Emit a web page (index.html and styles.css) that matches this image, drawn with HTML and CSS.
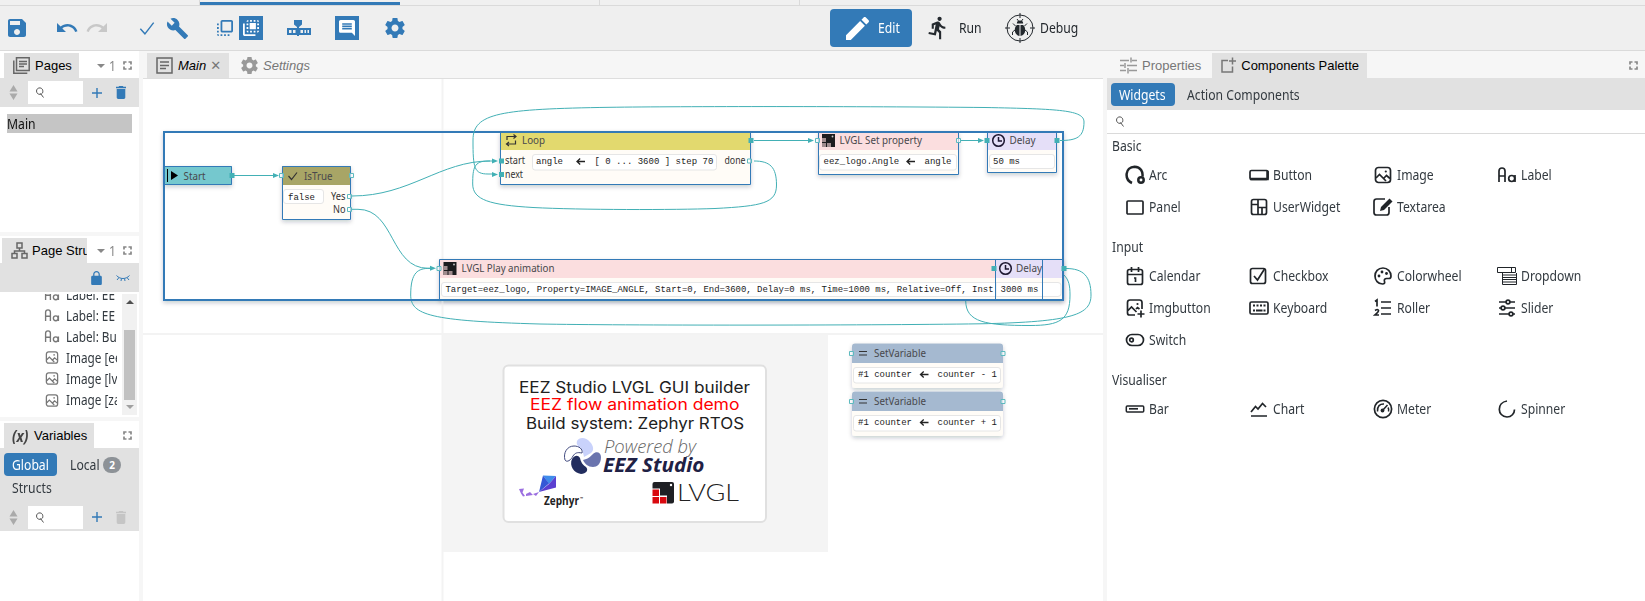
FILE: index.html
```html
<!DOCTYPE html>
<html lang="en">
<head>
<meta charset="utf-8">
<title>EEZ Studio</title>
<link rel="stylesheet" href="styles.css">
</head>
<body>
<svg class="defs" aria-hidden="true">
<symbol id="save" viewBox="3 3 18 18"><path d="M17 3H5c-1.11 0-2 .9-2 2v14c0 1.1.89 2 2 2h14c1.1 0 2-.9 2-2V7l-4-4zm-5 16c-1.66 0-3-1.34-3-3s1.34-3 3-3 3 1.34 3 3-1.34 3-3 3zm3-10H5V5h10v4z"/></symbol>
<symbol id="undo" viewBox="0 0 24 24"><path d="M12.5 8c-2.65 0-5.05.99-6.9 2.6L2 7v9h9l-3.62-3.62c1.39-1.16 3.16-1.88 5.12-1.88 3.54 0 6.55 2.31 7.6 5.5l2.37-.78C21.08 11.03 17.15 8 12.5 8z"/></symbol>
<symbol id="redo" viewBox="0 0 24 24"><path d="M18.4 10.6C16.55 8.99 14.15 8 11.5 8c-4.65 0-8.58 3.03-9.96 7.22L3.9 16c1.05-3.19 4.05-5.5 7.6-5.5 1.95 0 3.73.72 5.12 1.88L13 16h9V7l-3.6 3.6z"/></symbol>
<symbol id="check" viewBox="0 0 24 24"><path d="M4 13l5.500 6L20 5.500" class="ln"/></symbol>
<symbol id="build" viewBox="0 0 24 24"><path d="M22.7 19l-9.1-9.1c.9-2.3.4-5-1.500-6.900-2-2-5-2.400-7.400-1.300L9 6 6 9 1.600 4.700C.4 7.100.9 10.100 2.900 12.100c1.900 1.900 4.600 2.400 6.900 1.500l9.100 9.100c.4.4 1 .4 1.400 0l2.300-2.300c.5-.4.5-1.100.1-1.400z"/></symbol>
<symbol id="front" viewBox="3 3 18 18"><path d="M3 13h2v-2H3v2zm0 4h2v-2H3v2zm2 4v-2H3c0 1.1.89 2 2 2zM3 9h2V7H3v2zm12 12h2v-2h-2v2zm4-18H9c-1.11 0-2 .9-2 2v10c0 1.1.89 2 2 2h10c1.1 0 2-.9 2-2V5c0-1.1-.9-2-2-2zm0 12H9V5h10v10zm-8 6h2v-2h-2v2zm-4 0h2v-2H7v2z"/></symbol>
<symbol id="back" viewBox="3 3 18 18"><path d="M9 7H7v2h2V7zm0 4H7v2h2v-2zm0-8c-1.11 0-2 .9-2 2h2V3zm4 12h-2v2h2v-2zm6-12v2h2c0-1.1-.9-2-2-2zm-6 0h-2v2h2V3zM9 17v-2H7c0 1.1.89 2 2 2zm10-4h2v-2h-2v2zm0-4h2V7h-2v2zm0 8c1.1 0 2-.9 2-2h-2v2zM5 7H3v12c0 1.1.89 2 2 2h12v-2H5V7zm10-2h2V3h-2v2zm0 12h2v-2h-2v2zM10.500 6.500h7v7h-7z"/></symbol>
<symbol id="timeline" viewBox="0 0 24 16"><path d="M7 0h8v4.500l-3 2.500v9h-2V7L7 4.500zM0 8h24v7H0z"/><path class="cut" d="M2 10h2.500v3H2zM6 10h2.500v3H6zM13.500 10H16v3h-2.500zM17.500 10h1.500v3h-1.500zM20.500 10H22v3h-1.500z"/></symbol>
<symbol id="comment" viewBox="2 2 20 20"><path d="M21.99 4c0-1.1-.89-2-1.99-2H4c-1.1 0-2 .9-2 2v12c0 1.1.9 2 2 2h14l4 4-.01-18zM18 14H6v-2h12v2zm0-3H6V9h12v2zm0-3H6V6h12v2z"/></symbol>
<symbol id="gear" viewBox="2 2 20 20"><path d="M19.43 12.98c.04-.32.07-.64.07-.98s-.03-.66-.07-.98l2.110-1.650c.19-.15.24-.42.12-.64l-2-3.460c-.12-.22-.39-.3-.61-.22l-2.490 1c-.52-.4-1.080-.73-1.690-.98l-.38-2.650C14.460 2.180 14.250 2 14 2h-4c-.25 0-.46.18-.49.42l-.38 2.650c-.61.25-1.170.59-1.690.98l-2.490-1c-.23-.09-.49 0-.61.22l-2 3.460c-.13.22-.07.49.12.64l2.110 1.650c-.04.32-.07.65-.07.98s.03.66.07.98l-2.110 1.650c-.19.15-.24.42-.12.64l2 3.460c.12.22.39.3.61.22l2.490-1c.52.4 1.080.73 1.690.98l.38 2.650c.03.24.24.42.49.42h4c.25 0 .46-.18.49-.42l.38-2.650c.61-.25 1.170-.59 1.690-.98l2.490 1c.23.09.49 0 .61-.22l2-3.460c.12-.22.07-.49-.12-.64l-2.110-1.650zM12 15.500c-1.930 0-3.500-1.570-3.500-3.500s1.570-3.500 3.500-3.500 3.500 1.570 3.500 3.500-1.570 3.500-3.500 3.500z"/></symbol>
<symbol id="edit" viewBox="3 3 18 18"><path d="M3 17.250V21h3.750L17.810 9.940l-3.750-3.750L3 17.250zM20.710 7.040c.39-.39.39-1.020 0-1.410l-2.340-2.340c-.39-.39-1.020-.39-1.410 0l-1.830 1.830 3.750 3.750 1.830-1.830z"/></symbol>
<symbol id="run" viewBox="1.500 1.500 20 21.500"><path d="M13.490 5.480c1.100 0 2-.9 2-2s-.9-2-2-2-2 .9-2 2 .9 2 2 2zm-3.600 13.900l1-4.400 2.100 2v6h2v-7.500l-2.100-2 .6-3c1.300 1.500 3.300 2.500 5.500 2.500v-2c-1.900 0-3.500-1-4.300-2.400l-1-1.600c-.4-.6-1-1-1.700-1-.3 0-.5.1-.8.1l-5.200 2.200v4.700h2v-3.400l1.800-.7-1.600 8.100-4.900-1-.4 2 7 1.400z"/></symbol>
<symbol id="bug" viewBox="0 0 30 30"><g class="thin"><circle cx="15" cy="15" r="13"/><path d="M15 0v5M15 25v5M0 15h5M25 15h5M12 6l1.500 2M18 6l-1.500 2M10.500 13L8 10.500M19.500 13l2.500-2.500M10 17l-2.500 2v3M20 17l2.500 2v3"/></g><path d="M11.800 10.500a3.200 3 0 0 1 6.400 0zM14.500 12v11c-3-.5-4.700-3-4.700-6 0-2.500 1-4.500 2.200-5zM15.500 12v11c3-.5 4.700-3 4.700-6 0-2.500-1-4.500-2.200-5z"/></symbol>
<symbol id="trash" viewBox="5 3 14 18"><path d="M6 19c0 1.1.9 2 2 2h8c1.100 0 2-.9 2-2V7H6v12zM19 4h-3.500l-1-1h-5l-1 1H5v2h14V4z"/></symbol>
<symbol id="add" viewBox="5 5 14 14"><path d="M19 13h-6v6h-2v-6H5v-2h6V5h2v6h6v2z"/></symbol>
<symbol id="lock" viewBox="4 1 16 21"><path d="M18 8h-1V6c0-2.760-2.240-5-5-5S7 3.240 7 6v2H6c-1.100 0-2 .9-2 2v10c0 1.100.9 2 2 2h12c1.100 0 2-.9 2-2V10c0-1.100-.9-2-2-2zM15.100 8H8.900V6c0-1.710 1.390-3.100 3.100-3.100 1.710 0 3.100 1.390 3.100 3.100v2z"/></symbol>
<symbol id="eyeoff" viewBox="0 0 14 8"><path class="thin" d="M.5 1.500C4 5.500 10 5.500 13.500 1.500M3 3.500L1 6M5.500 4.500L5 7M8.500 4.500L9 7M11 3.500L13 6"/></symbol>
<symbol id="sort" viewBox="0 0 8 15"><path d="M4 0l4 6.500H0zM4 15L0 8.500h8z"/></symbol>
<symbol id="find" viewBox="0 0 10 11"><path class="thin" d="M7.500 6C6.300 7.600 4 7.800 2.500 6.500 1.200 5 1.200 3 2.500 1.700 4 .4 6.300.7 7.300 2.200 8 3.500 8 5 7.500 6zM5.500 6.500l3 4"/></symbol>
<symbol id="max" viewBox="0 0 9 9"><path class="ln" d="M1 3.500V1h2.500M5.500 1H8v2.500M8 5.500V8H5.500M3.500 8H1V5.500"/></symbol>
<symbol id="pages" viewBox="0 0 17 17"><path class="md" d="M3.500 .8h12.700v12.700H3.500zM.8 3.500v12.700h13.500M6 4.500h8M6 7h8M6 9.500h5"/></symbol>
<symbol id="page" viewBox="0 0 17 17"><path class="md" d="M1 1h15v15H1zM4 5h9M4 8.500h9M4 11.500h6"/></symbol>
<symbol id="tree" viewBox="0 0 17 17"><path class="md" d="M6 1h5v5H6zM1 11.500h5V16H1zM11 11.500h5V16h-5zM8.500 6v3M3.500 11.500V9h10v2.500"/></symbol>
<symbol id="tune" viewBox="0 0 17 16"><path class="md" d="M0 3h9M12 3h5M11 0v5M0 8h4M7 8h10M5 5.500v5M0 13h6M9 13h8M8 10.500V16"/></symbol>
<symbol id="addcomp" viewBox="0 0 15 16"><path class="md" d="M7 3H1v11.500h10.500V9M11.500 0v7M8 3.500h7"/></symbol>
<symbol id="label" viewBox="0 0 20 18"><path class="ln" d="M2 16V5q0-3 3-3t3 3v11M2 10h6M18 9v7"/><circle class="ln" cx="14.700" cy="12.500" r="3"/></symbol>
<symbol id="image" viewBox="-1 -1 20 20"><rect class="ln" x="1.500" y="1.500" width="15" height="15" rx="3"/><path class="ln" d="M2 12l3.500-3.500 6.500 6.500M10 12l2.500-2.500L16 12.500"/><circle cx="11.800" cy="5.500" r="1.100"/></symbol>
<symbol id="arc" viewBox="0 0 20 20"><path class="hv" d="M7 18C-1 14.500 0 2 9.500 1.800 16 2 18 7 17.500 11.500"/><circle class="hv" cx="16" cy="15" r="2.700"/></symbol>
<symbol id="button" viewBox="0 0 20 20"><rect class="ln" x="1" y="5.500" width="18" height="9" rx="1.500"/><path class="hv" d="M1 14h17.500V6"/></symbol>
<symbol id="panel" viewBox="0 0 20 20"><rect class="ln" x="2" y="4" width="16" height="13" rx="1"/></symbol>
<symbol id="uw" viewBox="0 0 20 20"><rect class="ln" x="2.500" y="2.500" width="15" height="15" rx="2"/><path class="ln" d="M9 2.500v15M9 10.500h8.500M2.500 7.500H9M13 10.500v7"/></symbol>
<symbol id="textarea" viewBox="0 0 20 20"><path class="ln" d="M12 2H3.500Q1 2 1 4.500v11Q1 18 3.500 18h10q2.500 0 2.500-2.500V10"/><path d="M7 14l1-4 8.500-8.500 3 3L11 13z"/></symbol>
<symbol id="cal" viewBox="0 0 20 20"><rect class="ln" x="2.500" y="3.500" width="15" height="15" rx="2"/><path class="ln" d="M2.500 8.500h15M6.500 1v5M13.500 1v5M9 12h1.500v4"/></symbol>
<symbol id="cbx" viewBox="0 0 20 20"><rect class="ln" x="1.500" y="2.500" width="15" height="15" rx="2"/><path class="ln" d="M5 10l3.500 4L15.500 3"/></symbol>
<symbol id="wheel" viewBox="0 0 20 20"><path class="ln" d="M10 2C5 2 2 5.700 2 10s3 8 7.500 8c2 0 2.500-1 2-2.500-.7-2 .5-3 2-3H16c1.500 0 2-1 2-2.500C18 5.500 14.500 2 10 2z"/><circle cx="6" cy="10" r="1.400"/><circle cx="9" cy="6" r="1.400"/><circle cx="13.500" cy="7.500" r="1.400"/></symbol>
<symbol id="dd" viewBox="0 0 20 20"><path class="thin" d="M.5 1.500h18v5H.5zM14.500 1.500v5M5.500 9h14M5.500 11.500h14M5.500 13.500h14M5.500 16h14M5.500 18.500h14M5.500 7v11.500M19.500 7v11.500"/></symbol>
<symbol id="imgb" viewBox="0 0 20 20"><path class="ln" d="M10 17H4.500Q2.500 17 2.500 15V4.500Q2.500 2 5 2h9.500Q17 2 17 4.500V11M3 12.500L6.500 9l5 5M11 11l1.500-1.500 2 1.500M16 12.500v7M12.500 16h7"/><circle cx="12.500" cy="6" r="1.100"/></symbol>
<symbol id="kbd" viewBox="0 0 20 20"><rect class="ln" x="1" y="4" width="18" height="12" rx="1.500"/><path d="M4 6.500h2v2H4zM7.500 6.500h2v2h-2zM11 6.500h2v2h-2zM14.500 6.500h2v2h-2zM4 11.500h2v2H4zM7 11.500h6.500v2H7zM14.500 11.500h2v2h-2z"/></symbol>
<symbol id="roller" viewBox="0 0 20 20"><path class="ln" d="M8 4h10M8 10h10M8 16h10M2 3.500L4 2v6.500M2 12.500q3-2 3.500 0 0 1.500-3.500 4.500h4"/></symbol>
<symbol id="slider" viewBox="0 0 20 20"><path class="ln" d="M2 4h7M13 4h5M2 10h2M8 10h10M2 16h10M16 16h2"/><circle class="ln" cx="11" cy="4" r="1.900"/><circle class="ln" cx="6" cy="10" r="1.900"/><circle class="ln" cx="14" cy="16" r="1.900"/></symbol>
<symbol id="switch" viewBox="0 0 20 20"><rect class="ln" x="1.500" y="4.500" width="17" height="11" rx="5.500"/><circle class="ln" cx="6.500" cy="10" r="1.800"/></symbol>
<symbol id="bar" viewBox="0 0 20 20"><rect class="md" x="1.300" y="7" width="17.400" height="6" rx="1"/><path class="ln" d="M4 9.800h9"/></symbol>
<symbol id="chart" viewBox="0 0 20 20"><path class="ln" d="M2 17h16M2 13l4.500-5.500 2.500 2.500 4.500-5.500L17 8"/></symbol>
<symbol id="meter" viewBox="0 0 20 20"><circle class="ln" cx="10" cy="10" r="8.600"/><path class="md" d="M4.500 12.500C4 7 7 4.800 11 5M15.500 12.500q.6-2.500-.5-4M9.500 11.500l5-5.500"/><circle cx="9.500" cy="11.500" r="1.900"/></symbol>
<symbol id="spin" viewBox="0 0 20 20"><path class="ln" d="M10 2C-.5 3.500 0 17.500 10 18c4.500 0 7.500-3.500 7.500-7.500"/></symbol>
</svg>

<div class="app">
  <div class="strip"><i class="s1"></i><i class="s2"></i><i class="s3"></i><i class="s4"></i></div>
  <header class="bar">
    <svg class="i t-save"><use href="#save"/></svg>
    <svg class="i t-undo"><use href="#undo"/></svg>
    <svg class="i t-redo"><use href="#redo"/></svg>
    <svg class="i t-check"><use href="#check"/></svg>
    <svg class="i t-build"><use href="#build"/></svg>
    <svg class="i t-front"><use href="#front"/></svg>
    <span class="on t-back"><svg class="i"><use href="#back"/></svg></span>
    <svg class="i t-time"><use href="#timeline"/></svg>
    <span class="on t-comm"><svg class="i"><use href="#comment"/></svg></span>
    <svg class="i t-gear"><use href="#gear"/></svg>
    <button class="mode active"><svg class="i"><use href="#edit"/></svg><span class="n">Edit</span></button>
    <button class="mode m-run"><svg class="i"><use href="#run"/></svg><span class="n">Run</span></button>
    <button class="mode m-debug"><svg class="i"><use href="#bug"/></svg><span class="n">Debug</span></button>
  </header>
  <main class="work">
    <aside class="left">
      <section class="p-pages">
        <div class="tabs"><div class="tab"><svg class="i"><use href="#pages"/></svg>Pages</div><div class="tail"><i class="car"></i><span class="n">1</span><svg class="i"><use href="#max"/></svg></div></div>
        <div class="tools"><svg class="i sort"><use href="#sort"/></svg><div class="inp"><svg class="i find"><use href="#find"/></svg></div><svg class="i plus"><use href="#add"/></svg><svg class="i del"><use href="#trash"/></svg></div>
        <div class="row"><span class="n">Main</span></div>
      </section>
      <section class="p-struct">
        <div class="tabs"><div class="tab cutoff"><svg class="i"><use href="#tree"/></svg>Page Stru</div><div class="tail"><i class="car"></i><span class="n">1</span><svg class="i"><use href="#max"/></svg></div></div>
        <div class="tools right"><svg class="i lk"><use href="#lock"/></svg><svg class="i eye"><use href="#eyeoff"/></svg></div>
        <div class="listwrap">
          <div class="list">
            <div><svg class="i"><use href="#label"/></svg><span class="n">Label: EE</span></div>
            <div><svg class="i"><use href="#label"/></svg><span class="n">Label: EE</span></div>
            <div><svg class="i"><use href="#label"/></svg><span class="n">Label: Bu</span></div>
            <div><svg class="i"><use href="#image"/></svg><span class="n">Image [ee</span></div>
            <div><svg class="i"><use href="#image"/></svg><span class="n">Image [lv</span></div>
            <div><svg class="i"><use href="#image"/></svg><span class="n">Image [za</span></div>
          </div>
          <div class="scroll"><i class="up"></i><b></b><i class="dn"></i></div>
        </div>
      </section>
      <section class="p-vars">
        <div class="tabs"><div class="tab"><em class="fx">(x)</em>Variables</div><div class="tail"><svg class="i"><use href="#max"/></svg></div></div>
        <div class="pills"><span class="pill active"><span class="n">Global</span></span><span class="pill local"><span class="n">Local</span><b>2</b></span><span class="pill"><span class="n">Structs</span></span></div>
        <div class="tools vt"><svg class="i sort"><use href="#sort"/></svg><div class="inp"><svg class="i find"><use href="#find"/></svg></div><svg class="i plus"><use href="#add"/></svg><svg class="i del off"><use href="#trash"/></svg></div>
      </section>
    </aside>
    <div class="center">
      <div class="tabs ed"><div class="tab it"><svg class="i"><use href="#page"/></svg>Main<span class="x">✕</span></div><div class="tab it idle"><svg class="i"><use href="#gear"/></svg>Settings</div></div>
      <svg class="canvas" viewBox="143 79 960 522">
        <defs>
          <filter id="sh" x="-20%" y="-30%" width="140%" height="170%"><feDropShadow dx="0" dy="2" stdDeviation="2" flood-color="#123" flood-opacity=".22"/></filter>
          <g id="arrow"><path d="M9 3.500H1M4.200.5L1 3.500l3.200 3" fill="none" stroke="#222" stroke-width="1.300"/></g>
          <g id="lv"><path fill="#1c1c1e" d="M0 0h13v13H0z"/><path fill="#a08c8e" d="M0 4h4v4H0zM0 9h4v4H0zM5 9h4v4H5z"/><circle cx="10.500" cy="2.500" r=".9" fill="#ccc"/></g>
          <g id="clock" fill="none" stroke="#1c1630" stroke-width="1.500"><circle cx="6.500" cy="6.500" r="5.800"/><path d="M6.500 3v4h3.500"/></g>
          <path id="hd" d="M-6-2.500L0 0l-6 2.500z" fill="#42b0b5"/>
        </defs>
        <path fill="#f4f4f4" d="M442 333h386v219H442z"/>
        <rect class="cardp" x="503.500" y="365.500" width="262.500" height="156.500" rx="5"/>
        <g class="mont">
          <text x="519" y="392.700" textLength="231" lengthAdjust="spacingAndGlyphs">EEZ Studio LVGL GUI builder</text>
          <text x="530" y="410" textLength="209.500" lengthAdjust="spacingAndGlyphs" class="red">EEZ flow animation demo</text>
          <text x="526" y="429" textLength="218" lengthAdjust="spacingAndGlyphs">Build system: Zephyr RTOS</text>
        </g>
        <text class="pow" x="604" y="453.300" textLength="92" lengthAdjust="spacingAndGlyphs">Powered by</text>
        <text class="eez" x="603" y="472.300" textLength="101.500" lengthAdjust="spacingAndGlyphs">EEZ Studio</text>
        <path fill="#c9d2fb" d="M577 441c2-4 9-4 13 1 4 4 4 9 1 11l-7 4c-1-4-1-6-3-9-3-2-5-3-4-7z"/>
        <path fill="#6a74ae" d="M583 460c5-1 7-3 10-6 3-3 8-2 8 3 0 7-4 10-8 10-5 0-8-3-10-7z"/>
        <path fill="#222d5e" d="M572 459c3-4 6-4 8-1 1 4 2 6 6 9 3 3 0 7-5 7-7-1-12-8-9-15z"/>
        <path fill="#fff" stroke="#424b80" d="M565 460c-2-7 2-14 9-14 5 0 9 3 8 7-5-1-7 0-9 3-2 4-6 7-8 4z"/>
        <path fill="#3f8ceb" d="M543 475.500l13 .5-7 8z"/><path fill="#3558d6" d="M543 475.500l6 8-10 8.500z"/><path fill="#5b3fd0" d="M556 476v11.500l-17 4.500 10-8z"/><path fill="#9b6fe0" d="M519 489l5-.5-1.500 4 2.500 3.500-2 .5-2-3zM526 494l4-2 3 3-7 1zM533 494l6-2-3 4z"/>
        <text class="zep" x="544" y="505" textLength="35" lengthAdjust="spacingAndGlyphs">Zephyr</text><text x="580" y="500" class="tm">™</text>
        <rect x="652.500" y="482" width="21.500" height="21.500" rx="2" fill="#1f2024"/><circle cx="671" cy="485" r="1.200" fill="#fff"/><path fill="#fff" d="M652 488.500h8v7h7v8.500h-15z"/><path fill="#d9090f" d="M652.500 489.500h6.500v6.500h-6.500zM652.500 497h6.500v6.500h-6.500zM660 497h6.500v6.500H660z"/>
        <text class="lvgl" x="677" y="501" textLength="62" lengthAdjust="spacingAndGlyphs">LVGL</text>

        <rect class="sel" x="164" y="132" width="899" height="168" filter="url(#sh)"/>
        <path class="guide" d="M442.500 79v522M143 334h960"/>
        <path class="wire" d="M1064 275C1069 280 1070 286 1070 295C1070 320 1060 325.500 1030 325.500C985 325.500 966 322 965.700 301"/>
        <path class="wire" d="M1066 268.500C1083 268.500 1091 276 1091 295C1091 314 1075 322 980 323.800C860 325.500 620 325.500 540 324C430 321 410.700 315 410.700 295C410.700 272 418 268.300 430 268.300"/>

        <g filter="url(#sh)">
          <path fill="#74c8ce" d="M164 166h68v19h-68z"/>
          <path fill="#fffcf7" d="M282 166h69v54h-69zM500 132h251v53H500zM818 132h141v43H818zM987 132h70v41h-70zM439 259h625v41H439z"/>
          <rect fill="#fffcf7" x="852" y="343.500" width="151" height="44.500" rx="3"/><rect fill="#fffcf7" x="852" y="391.500" width="151" height="44.500" rx="3"/>
        </g>
        <path fill="#a8a566" d="M282 166h69v19h-69z"/><path fill="#e2d96e" d="M500 132h251v18H500z"/>
        <path fill="#fbdedf" d="M818 132h141v18H818zM439 259h556v19H439z"/><path fill="#e5dff8" d="M987 132h70v18h-70zM995 259h68v19h-68z"/>
        <path fill="#a5b9d0" d="M852 363v-16.500q0-3 3-3h145q3 0 3 3V363zM852 411v-16.500q0-3 3-3h145q3 0 3 3V411z"/>
        <g class="fld">
          <rect x="283.500" y="189.500" width="40" height="14" rx="2.500"/><rect x="532.500" y="154.500" width="184" height="15.500" rx="2.500"/>
          <rect x="819.500" y="154.500" width="137" height="15.500" rx="2.500"/><rect x="989.500" y="154.500" width="65" height="14" rx="2.500"/>
          <path d="M995 282.500H444q-2.500 0-2.500 2.500v9q0 2.500 2.500 2.500h551M996 282.500h62q3 0 3 3v8q0 3-3 3h-62z"/>
          <rect x="853.500" y="367.500" width="147" height="15.500" rx="2.500"/><rect x="853.500" y="415.500" width="147" height="15.500" rx="2.500"/>
        </g>
        <g class="nb">
          <path d="M164.500 166.500h67v18h-67zM282.500 166.500h68v53h-68zM500.500 132.500v52h250v-52M818.500 132.500v42h140v-42M987.500 132.500v40h69v-40M439.500 300v-40.500H1063M995.500 260v40M1042.500 260v40"/>
          <rect class="thick" x="164" y="132" width="899" height="168"/>
        </g>
        <g class="ttl">
          <text x="183.500" y="179.500" textLength="22" lengthAdjust="spacingAndGlyphs">Start</text><text x="304" y="179.500" textLength="28.500" lengthAdjust="spacingAndGlyphs">IsTrue</text>
          <text x="522" y="144" textLength="23" lengthAdjust="spacingAndGlyphs">Loop</text><text x="839.500" y="144" textLength="82.500" lengthAdjust="spacingAndGlyphs">LVGL Set property</text>
          <text x="1009.500" y="144" textLength="26" lengthAdjust="spacingAndGlyphs">Delay</text><text x="461.500" y="272" textLength="93" lengthAdjust="spacingAndGlyphs">LVGL Play animation</text>
          <text x="1016" y="272" textLength="26" lengthAdjust="spacingAndGlyphs">Delay</text><text x="874" y="357" textLength="52" lengthAdjust="spacingAndGlyphs">SetVariable</text><text x="874" y="405" textLength="52" lengthAdjust="spacingAndGlyphs">SetVariable</text>
        </g>
        <g class="pt">
          <text x="331" y="200" textLength="14.500" lengthAdjust="spacingAndGlyphs">Yes</text><text x="333" y="213" textLength="12.500" lengthAdjust="spacingAndGlyphs">No</text>
          <text x="505" y="164" textLength="20" lengthAdjust="spacingAndGlyphs">start</text><text x="505" y="178" textLength="18" lengthAdjust="spacingAndGlyphs">next</text><text x="724.500" y="164" textLength="21" lengthAdjust="spacingAndGlyphs">done</text>
        </g>
        <g class="mono">
          <text x="288" y="200">false</text><text x="536" y="164">angle</text><text x="594.500" y="164">[ 0 ... 3600 ] step 70</text>
          <text x="823.500" y="164">eez_logo.Angle</text><text x="924.500" y="164">angle</text><text x="993" y="164">50 ms</text>
          <text x="445.500" y="292" textLength="548" lengthAdjust="spacingAndGlyphs">Target=eez_logo, Property=IMAGE_ANGLE, Start=0, End=3600, Delay=0 ms, Time=1000 ms, Relative=Off, Inst</text>
          <text x="1000.500" y="292">3000 ms</text>
          <text x="858" y="377">#1 counter</text><text x="937.500" y="377">counter - 1</text><text x="858" y="425">#1 counter</text><text x="937.500" y="425">counter + 1</text>
        </g>
        <use href="#arrow" x="576" y="158"/><use href="#arrow" x="906" y="158"/><use href="#arrow" x="919.500" y="371"/><use href="#arrow" x="919.500" y="419"/>
        <use href="#lv" x="822" y="134"/><use href="#lv" x="443.500" y="262"/><use href="#clock" x="992" y="134"/><use href="#clock" x="999" y="262"/>
        <path d="M171 171l7 4.500-7 4.500z"/><path d="M167.500 169v13" stroke="#000"/>
        <path class="ic" d="M288.500 176l3 3.500 5.500-7M507 140v-3.500h8.500M513.500 134.500l2.500 2-2.500 2M515.500 140.500v3.500H507M509 142l-2.500 2 2.500 2M859 351.500h8M859 355h8M859 399.500h8M859 403h8"/>

        <g class="wire">
          <path d="M233 175.500h42M352 196C410 196 440 161 490 161M352 209.300h6C395 209.300 390 268.300 428 268.300h6M754 140.500h58M961 140.500h21"/>
          <path d="M754 161C770 161 776.500 167 776.500 185C776.500 203 763 206 715 208.500C675 210 580 210 533 207.500C490 205 472.700 200 472.700 184C472.700 168 474 161 488 161h6"/>
          <path d="M1060 140.500C1077 140.500 1084 137 1084 122C1084 110 1060 109 985 107.500C860 106.300 680 106.300 610 107.300C500 109 473 113 473 140C473 168 474 174 488 174h6"/>
        </g>
        <use href="#hd" x="279" y="175.500"/><use href="#hd" x="498" y="161"/><use href="#hd" x="498" y="174.500"/><use href="#hd" x="814" y="140.500"/><use href="#hd" x="984" y="140.500"/><use href="#hd" x="436" y="268.300"/>
        <path fill="#42b0b5" d="M229.500 173h5v5h-5zM499 158.500h5v5h-5zM499 172h5v5h-5zM748.500 138h5v5h-5zM984.500 138h5v5h-5zM1054.500 138h5v5h-5zM991.500 266h5v5h-5zM1061.500 266h5v5h-5z"/>
        <path class="port" d="M279.500 173.500h4v4h-4zM349.500 173.500h4v4h-4zM347.500 194.500h4v4h-4zM347.500 207.500h4v4h-4zM747.500 159h4v4h-4zM815.500 138.500h4v4h-4zM956.500 138.500h4v4h-4zM437 266.500h4v4h-4zM849.500 351.500h4v4h-4zM1001 351.500h4v4h-4zM849.500 399.500h4v4h-4zM1001 399.500h4v4h-4z"/>
      </svg>
    </div>
    <aside class="rightp">
      <div class="tabs"><div class="tab idle"><svg class="i"><use href="#tune"/></svg>Properties</div><div class="tab cp"><svg class="i"><use href="#addcomp"/></svg>Components Palette</div><div class="tail"><svg class="i"><use href="#max"/></svg></div></div>
      <div class="pills"><span class="pill active"><span class="n">Widgets</span></span><span class="pill ac"><span class="n">Action Components</span></span></div>
      <div class="search"><svg class="i find"><use href="#find"/></svg></div>
      <div class="sec"><h3><span class="n">Basic</span></h3><div class="grid">
        <div><svg class="i"><use href="#arc"/></svg><span class="n">Arc</span></div><div><svg class="i"><use href="#button"/></svg><span class="n">Button</span></div><div><svg class="i"><use href="#image"/></svg><span class="n">Image</span></div><div><svg class="i"><use href="#label"/></svg><span class="n">Label</span></div>
        <div><svg class="i"><use href="#panel"/></svg><span class="n">Panel</span></div><div><svg class="i"><use href="#uw"/></svg><span class="n">UserWidget</span></div><div><svg class="i"><use href="#textarea"/></svg><span class="n">Textarea</span></div></div></div>
      <div class="sec"><h3><span class="n">Input</span></h3><div class="grid">
        <div><svg class="i"><use href="#cal"/></svg><span class="n">Calendar</span></div><div><svg class="i"><use href="#cbx"/></svg><span class="n">Checkbox</span></div><div><svg class="i"><use href="#wheel"/></svg><span class="n">Colorwheel</span></div><div><svg class="i"><use href="#dd"/></svg><span class="n">Dropdown</span></div>
        <div><svg class="i"><use href="#imgb"/></svg><span class="n">Imgbutton</span></div><div><svg class="i"><use href="#kbd"/></svg><span class="n">Keyboard</span></div><div><svg class="i"><use href="#roller"/></svg><span class="n">Roller</span></div><div><svg class="i"><use href="#slider"/></svg><span class="n">Slider</span></div>
        <div><svg class="i"><use href="#switch"/></svg><span class="n">Switch</span></div></div></div>
      <div class="sec"><h3><span class="n">Visualiser</span></h3><div class="grid">
        <div><svg class="i"><use href="#bar"/></svg><span class="n">Bar</span></div><div><svg class="i"><use href="#chart"/></svg><span class="n">Chart</span></div><div><svg class="i"><use href="#meter"/></svg><span class="n">Meter</span></div><div><svg class="i"><use href="#spin"/></svg><span class="n">Spinner</span></div></div></div>
    </aside>
  </main>
</div>
</body>
</html>
```
FILE: styles.css
```css
* { box-sizing: border-box; }
body { margin: 0; background: #fff; color: #333a40; font: 14px/20px "Noto Sans", "Open Sans", sans-serif; }
.defs { display: block; width: 0; height: 0; }
.i { display: block; flex: none; fill: currentColor; overflow: visible; }
.thin, .md, .ln, .hv { fill: none; stroke: currentColor; stroke-width: 1; }
.md { stroke-width: 1.5; }
.ln { stroke-width: 1.7; }
.hv { stroke-width: 2.5; }
.cut { fill: #efefef; }
.n { display: inline-block; white-space: nowrap; transform: scaleX(.87); transform-origin: 0 50%; }
.app { width: 1645px; height: 601px; overflow: hidden; display: flex; flex-direction: column; }

.strip { height: 6px; flex: none; display: flex; background: #f0f0f0; border-bottom: 1px solid #dadada; }
.strip i { height: 5px; border-right: 1px solid #dadada; }
.s1 { width: 200px; }
.strip .s2 { width: 200px; height: 5px; border: 0; border-top: 2px solid #f0f0f0; background: #337ab7; }
.s3 { width: 200px; }
.s4 { width: 200px; }
.bar { height: 45px; flex: none; display: flex; align-items: center; background: #efefef; border-bottom: 1px solid #dadada; color: #337ab7; padding: 0 0 0 8px; }
.t-save { width: 18px; height: 18px; }
.t-undo { width: 24px; height: 24px; margin-left: 29px; }
.t-redo { width: 24px; height: 24px; margin-left: 6px; color: #c8c8c8; }
.t-check { width: 24px; height: 20px; margin-left: 26px; }
.t-build { width: 23px; height: 23px; margin-left: 7px; }
.t-front { width: 16px; height: 16px; margin-left: 28px; }
.on { width: 24px; height: 24px; background: #337ab7; color: #fff; display: flex; align-items: center; justify-content: center; }
.on .i { width: 16px; height: 16px; }
.t-back { margin-left: 6px; }
.t-time { width: 24px; height: 16px; margin-left: 24px; }
.t-comm { margin-left: 24px; }
.t-gear { width: 20px; height: 20px; margin-left: 26px; }
.mode { display: flex; align-items: center; height: 38px; border: 0; padding: 0; background: none; color: #24292e; font: inherit; }
.mode.active { width: 82px; margin-left: 425px; padding-left: 16px; gap: 9px; border-radius: 4px; background: #337ab7; color: #fff; }
.mode.active .i { width: 23px; height: 23px; }
.m-run { width: 77px; margin-left: 15px; gap: 11px; }
.m-run .i { width: 21px; height: 26px; }
.m-debug { margin-left: 1px; gap: 5px; }
.m-debug .i { width: 30px; height: 30px; }

.work { flex: 1; display: grid; grid-template-columns: 139px 960px 538px; column-gap: 4px; background: #f6f6f6; min-height: 0; }
.left { display: flex; flex-direction: column; gap: 4px; min-width: 0; }
.left section { background: #fff; overflow: hidden; flex: none; }
.p-pages { height: 181px; }
.p-struct { height: 181px; }
.left .p-vars { flex: 1; }
.tabs { height: 27px; padding: 2px 0 0 4px; display: flex; font: 13px/25px "Liberation Sans", Arial, sans-serif; }
.tab { height: 25px; flex: none; display: flex; align-items: center; background: #e1e1e1; color: #000; white-space: nowrap; overflow: hidden; padding: 0 7px 0 9px; }
.tab .i { width: 17px; height: 17px; color: #666; margin-right: 5px; }
.p-pages .tab, .it { padding-left: 9px; }
.tail { margin-left: auto; display: flex; align-items: center; color: #888; padding-right: 7px; }
.tail .n { margin: 0 6px 0 4px; font: 14px/20px "Noto Sans", sans-serif; }
.tail .i { width: 9px; height: 9px; }
.car { border: 4px solid transparent; border-top-color: #888; border-bottom: 0; width: 0; }
.cutoff { width: 85px; margin-left: -2px; padding-right: 0; }
.cutoff .i { margin-right: 4px; }
.tools { height: 29px; background: #e1e1e1; display: flex; align-items: center; color: #337ab7; padding-left: 9px; }
.sort { width: 9px; height: 15px; color: #aaa; }
.inp { width: 55px; height: 23px; background: #fff; margin-left: 10px; padding: 6px 0 0 7px; color: #555; }
.find { width: 10px; height: 11px; color: #555; }
.plus { width: 10px; height: 10px; margin-left: 9px; }
.del { width: 10px; height: 13px; margin-left: 14px; }
.off { color: #c5c5c5; }
.row { margin: 7px 7px 0; height: 19px; line-height: 19px; background: #c5c5c5; color: #111; }
.right { justify-content: flex-end; padding-right: 9px; }
.lk { width: 11px; height: 14px; margin-right: 14px; }
.eye { width: 14px; height: 8px; }
.listwrap { margin: 2px 2px 0 0; height: 121px; overflow: hidden; display: flex; justify-content: space-between; }
.list { width: 117px; padding-left: 44px; overflow: hidden; margin-top: -10px; }
.list div { height: 21.100px; display: flex; align-items: center; gap: 6px; }
.list .i { width: 16px; height: 15px; color: #777; }
.list .n { transform: scaleX(.84); }
.scroll { width: 15px; background: #f1f1f1; display: flex; flex-direction: column; align-items: center; }
.scroll b { width: 11px; height: 70px; background: #c1c1c1; }
.scroll i { border: 4px solid transparent; width: 0; }
.scroll .up { margin: 2px 0 26px; border-bottom-color: #505050; }
.scroll .dn { margin-top: 5px; border-top-color: #a0a0a0; }
.fx { font: italic bold 16px/20px "Noto Sans", sans-serif; color: #444; margin-right: 5px; transform: scaleX(.85); transform-origin: 0 50%; width: 17px; }
.p-vars .tab { padding-left: 8px; }
.pills { display: flex; flex-wrap: wrap; align-content: flex-start; background: #e1e1e1; padding: 5px 4px 4px; }
.pill { height: 23px; padding: 0 8px; display: flex; align-items: center; border-radius: 4px; }
.pill.active { background: #337ab7; color: #fff; }
.p-vars .pills { height: 54px; padding-bottom: 0; }
.p-vars .pill.active { width: 53px; }
.local { padding: 0 0 0 13px; width: 70px; }
.local .n { width: 33px; }
.local b { width: 18px; height: 16px; border-radius: 8px; background: #8d9297; color: #fff; font-size: 10px; line-height: 16px; text-align: center; }
.vt { height: 29px; padding-top: 1px; }

.center { display: flex; flex-direction: column; min-width: 0; }
.ed { height: 28px; border-bottom: 1px solid #dedede; }
.it { width: 82px; font-style: italic; }
.it .x { margin-left: 4px; color: #777; font: 13px/25px "DejaVu Sans", sans-serif; }
.ed .tab.idle { width: auto; margin-left: 3px; }
.idle { background: none; color: #777; }
.idle .i { color: #999; }
.canvas { display: block; width: 960px; height: 522px; background: #fff; }
.guide { fill: none; stroke: #f3f3f3; stroke-width: 2; }
.cardp { fill: #fff; stroke: #e0e0e0; stroke-width: 2; }
.mont { font: 400 16px Inter, sans-serif; fill: #212121; }
.red { fill: #f00; }
.pow { font: italic 300 17.500px "Open Sans", sans-serif; fill: #666; }
.eez { font: italic bold 19px "Open Sans", sans-serif; fill: #1f2145; }
.zep { font: bold 12px "Open Sans", sans-serif; fill: #222; }
.tm { font-size: 4px; }
.lvgl { font: 300 24px Lato, sans-serif; fill: #222; }
.wire { fill: none; stroke: #42b0b5; stroke-width: 1; }
.sel { fill: #fff; stroke: #337ab7; stroke-width: 2; }
.fld > * { fill: #fff; stroke: #e6e6e6; stroke-width: 1; }
.nb { fill: none; stroke: #337ab7; }
.thick { stroke-width: 2; }
.ttl { font: 11px "Noto Sans", sans-serif; fill: #48484c; }
.pt { font: 10px "Noto Sans", sans-serif; fill: #333; }
.mono { font: 9px "Liberation Mono", monospace; fill: #1b1b1b; white-space: pre; }
.ic { fill: none; stroke: #333; stroke-width: 1.200; }
.port { fill: #fff; fill-opacity: .6; stroke: #5dbabf; }

.rightp { background: #fff; min-width: 0; }
.rightp .tabs { background: #f6f6f6; padding-left: 4px; }
.rightp .tab.cp { width: 155px; margin-left: 4px; }
.rightp .tab.cp .i { width: 15px; color: #777; margin-right: 5px; }
.rightp .tail { padding-right: 7px; }
.rightp .pills { height: 32px; }
.rightp .pill.active { width: 64px; }
.ac { margin-left: 4px; }
.search { height: 24px; border-bottom: 1px solid #dadada; padding: 6px 0 0 8px; }
.sec { padding: 0 0 12px 5px; }
.sec h3 { margin: 0 0 1px; height: 24px; line-height: 23px; font-size: 14px; font-weight: 400; }
.grid { display: grid; grid-template-columns: repeat(4, 124px); grid-auto-rows: 32px; padding-left: 13px; }
.grid div { display: flex; align-items: center; gap: 4px; }
.grid .i { width: 20px; height: 20px; color: #212529; }
```
